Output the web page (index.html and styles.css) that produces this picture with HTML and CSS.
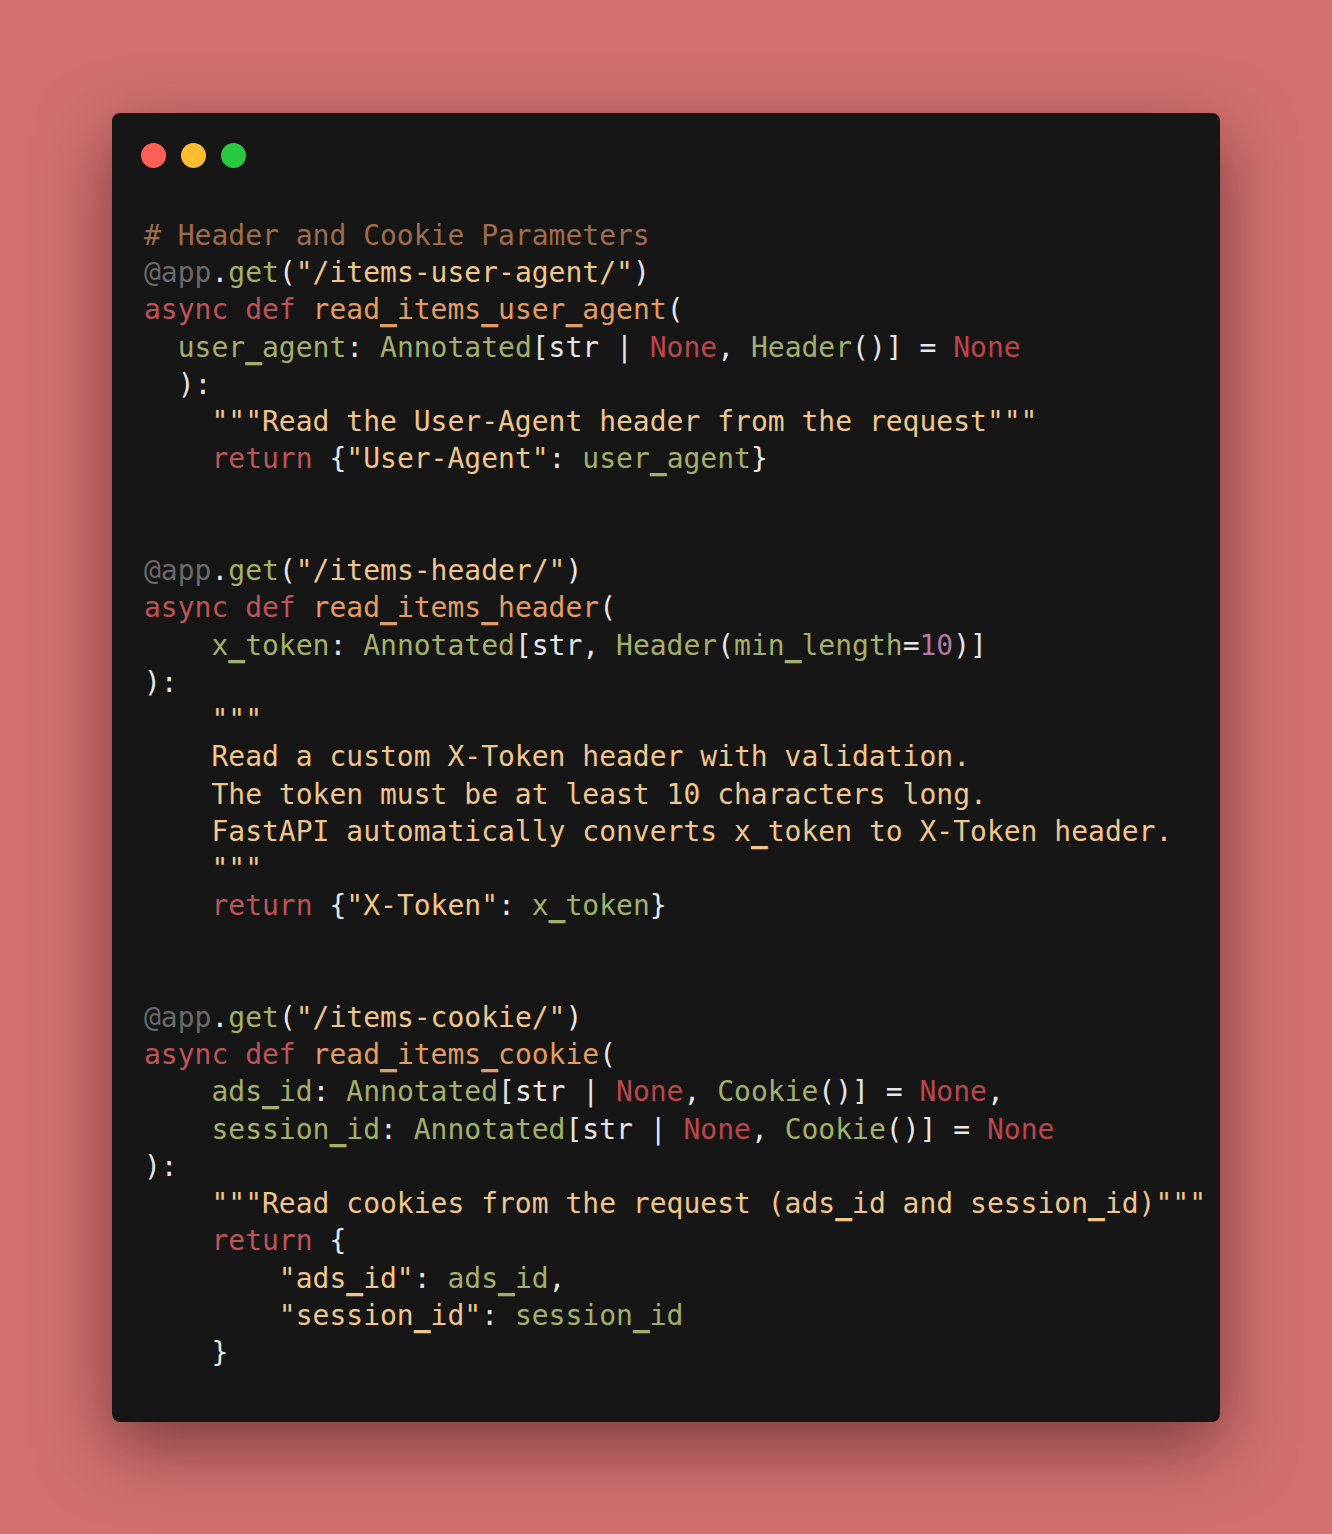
FILE: index.html
```html
<!DOCTYPE html>
<html>
<head>
<meta charset="utf-8">
<link rel="stylesheet" href="styles.css">
</head>
<body>
<div class="stage">
  <div class="window">
    <div class="lights">
      <span class="dot red"></span>
      <span class="dot yellow"></span>
      <span class="dot green"></span>
    </div>
<pre class="code"><span class="c"># Header and Cookie Parameters</span>
<span class="d">@app</span><span class="w">.</span><span class="g">get</span><span class="w">(</span><span class="s">"/items-user-agent/"</span><span class="w">)</span>
<span class="k">async</span> <span class="k">def</span> <span class="f">read<span class="u">_</span>items<span class="u">_</span>user<span class="u">_</span>agent</span><span class="w">(</span>
  <span class="g">user<span class="u">_</span>agent</span><span class="w">:</span> <span class="g">Annotated</span><span class="w">[str | </span><span class="n">None</span><span class="w">, </span><span class="g">Header</span><span class="w">()] = </span><span class="n">None</span>
  <span class="w">):</span>
    <span class="s">"""Read the User-Agent header from the request"""</span>
    <span class="k">return</span> <span class="w">{</span><span class="s">"User-Agent"</span><span class="w">:</span> <span class="g">user<span class="u">_</span>agent</span><span class="w">}</span>


<span class="d">@app</span><span class="w">.</span><span class="g">get</span><span class="w">(</span><span class="s">"/items-header/"</span><span class="w">)</span>
<span class="k">async</span> <span class="k">def</span> <span class="f">read<span class="u">_</span>items<span class="u">_</span>header</span><span class="w">(</span>
    <span class="g">x<span class="u">_</span>token</span><span class="w">:</span> <span class="g">Annotated</span><span class="w">[str, </span><span class="g">Header</span><span class="w">(</span><span class="g">min<span class="u">_</span>length</span><span class="w">=</span><span class="p">10</span><span class="w">)]</span>
<span class="w">):</span>
    <span class="s">"""
    Read a custom X-Token header with validation.
    The token must be at least 10 characters long.
    FastAPI automatically converts x<span class="u">_</span>token to X-Token header.
    """</span>
    <span class="k">return</span> <span class="w">{</span><span class="s">"X-Token"</span><span class="w">:</span> <span class="g">x<span class="u">_</span>token</span><span class="w">}</span>


<span class="d">@app</span><span class="w">.</span><span class="g">get</span><span class="w">(</span><span class="s">"/items-cookie/"</span><span class="w">)</span>
<span class="k">async</span> <span class="k">def</span> <span class="f">read<span class="u">_</span>items<span class="u">_</span>cookie</span><span class="w">(</span>
    <span class="g">ads<span class="u">_</span>id</span><span class="w">:</span> <span class="g">Annotated</span><span class="w">[str | </span><span class="n">None</span><span class="w">, </span><span class="g">Cookie</span><span class="w">()] = </span><span class="n">None</span><span class="w">,</span>
    <span class="g">session<span class="u">_</span>id</span><span class="w">:</span> <span class="g">Annotated</span><span class="w">[str | </span><span class="n">None</span><span class="w">, </span><span class="g">Cookie</span><span class="w">()] = </span><span class="n">None</span>
<span class="w">):</span>
    <span class="s">"""Read cookies from the request (ads<span class="u">_</span>id and session<span class="u">_</span>id)"""</span>
    <span class="k">return</span> <span class="w">{</span>
        <span class="s">"ads<span class="u">_</span>id"</span><span class="w">:</span> <span class="g">ads<span class="u">_</span>id</span><span class="w">,</span>
        <span class="s">"session<span class="u">_</span>id"</span><span class="w">:</span> <span class="g">session<span class="u">_</span>id</span>
    <span class="w">}</span></pre>
  </div>
</div>
</body>
</html>
```
FILE: styles.css
```css
html, body {
  margin: 0;
  padding: 0;
}
body {
  background: #d27070;
  width: 1332px;
  height: 1534px;
}
.stage {
  padding: 113px 112px 112px 112px;
}
.window {
  background: #161616;
  border-radius: 8px;
  height: 1309px;
  box-sizing: border-box;
  padding: 30px 32px 0 29px;
  box-shadow: 0 24px 70px rgba(40, 10, 10, 0.5);
}
.lights {
  display: flex;
  gap: 15px;
}
.dot {
  width: 25px;
  height: 25px;
  border-radius: 50%;
  display: block;
}
.red { background: #ff5f57; }
.yellow { background: #febc2e; }
.green { background: #28c840; }
.code {
  margin: 49px 0 0 3px;
  font-family: "DejaVu Sans Mono", monospace;
  font-size: 28px;
  line-height: 37.24px;
  color: #e6e6e6;
  white-space: pre;
  overflow: visible;
}
.u {
  text-shadow: 0 -1px 0 currentColor, 0 1px 0 currentColor;
}
.c { color: #9e6d4b; }
.d { color: #6a6a6a; }
.w { color: #e6e6e6; }
.g { color: #a3b06b; }
.s { color: #f0c68c; }
.k { color: #bf5458; }
.f { color: #e39c62; }
.n { color: #bb474c; }
.p { color: #b27ba3; }
```
